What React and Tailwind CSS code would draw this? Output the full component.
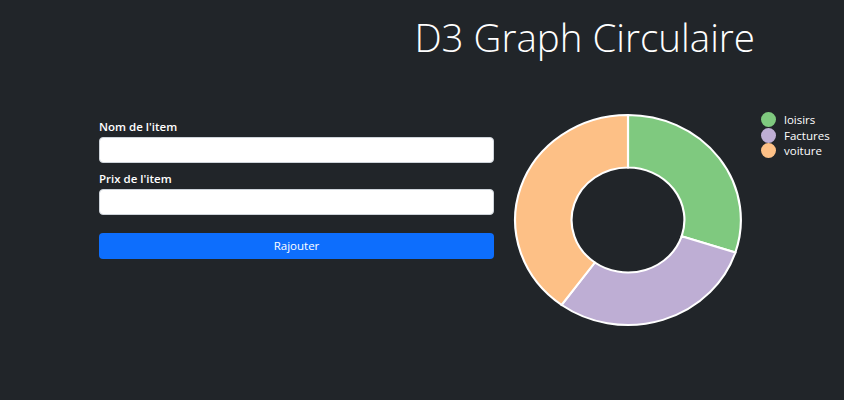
import React from 'react'

const data = [
  { name: 'loisirs', value: 30, color: '#7fc97f' },
  { name: 'Factures', value: 30, color: '#beaed4' },
  { name: 'voiture', value: 40, color: '#fdc086' },
]

function arcPath(a0, a1, r0, r1) {
  const p = (a, r) => [Math.sin(a) * r, -Math.cos(a) * r]
  const [x0, y0] = p(a0, r1)
  const [x1, y1] = p(a1, r1)
  const [x2, y2] = p(a1, r0)
  const [x3, y3] = p(a0, r0)
  const large = a1 - a0 > Math.PI ? 1 : 0
  return `M${x0},${y0}A${r1},${r1} 0 ${large} 1 ${x1},${y1}L${x2},${y2}A${r0},${r0} 0 ${large} 0 ${x3},${y3}Z`
}

function Donut() {
  const total = data.reduce((s, d) => s + d.value, 0)
  let start = 0
  const slices = data.map((d) => {
    const end = start + (d.value / total) * Math.PI * 2
    const path = arcPath(start, end, 52.5, 105)
    start = end
    return <path key={d.name} d={path} fill={d.color} stroke="#fff" strokeWidth="2" />
  })
  return (
    <svg width="232" height="216" viewBox="-116 -108 232 216" className="block">
      <g transform="scale(1.075,1)">{slices}</g>
    </svg>
  )
}

export default function App() {
  return (
    <div className="w-[844px] h-[400px] bg-[#212529] text-white overflow-hidden" style={{ fontFamily: '"Open Sans", sans-serif' }}>
      <div className="flex justify-end pr-[89px] pt-[12px]">
        <h1 className="text-[38.5px] font-light leading-[50px]">D3 Graph Circulaire</h1>
      </div>

      <div className="flex pt-[52px]">
        {/* form */}
        <div className="w-[395px] ml-[99px] pt-[5px]">
          <label className="block text-[11.5px] font-semibold leading-[16px] mb-[2px]">Nom de l'item</label>
          <input className="block w-full h-[26px] bg-white rounded-[4px] border border-[#ced4da]" />
          <label className="block text-[11.5px] font-semibold leading-[16px] mt-[8px] mb-[2px]">Prix de l'item</label>
          <input className="block w-full h-[26px] bg-white rounded-[4px] border border-[#ced4da]" />
          <button className="mt-[18px] w-full h-[26px] bg-[#0d6efd] rounded-[4px] text-[11.5px] text-white">Rajouter</button>
        </div>

        {/* chart */}
        <div className="ml-[18px] mt-[-2px]">
          <Donut />
        </div>

        {/* legend */}
        <div className="ml-[17px] mt-[-2px] flex flex-col gap-[0.5px]">
          {data.map((d) => (
            <div key={d.name} className="flex items-center h-[15px]">
              <span className="w-[15px] h-[15px] rounded-full" style={{ background: d.color }} />
              <span className="ml-[8px] text-[11.5px] leading-[15px]">{d.name}</span>
            </div>
          ))}
        </div>
      </div>
    </div>
  )
}
